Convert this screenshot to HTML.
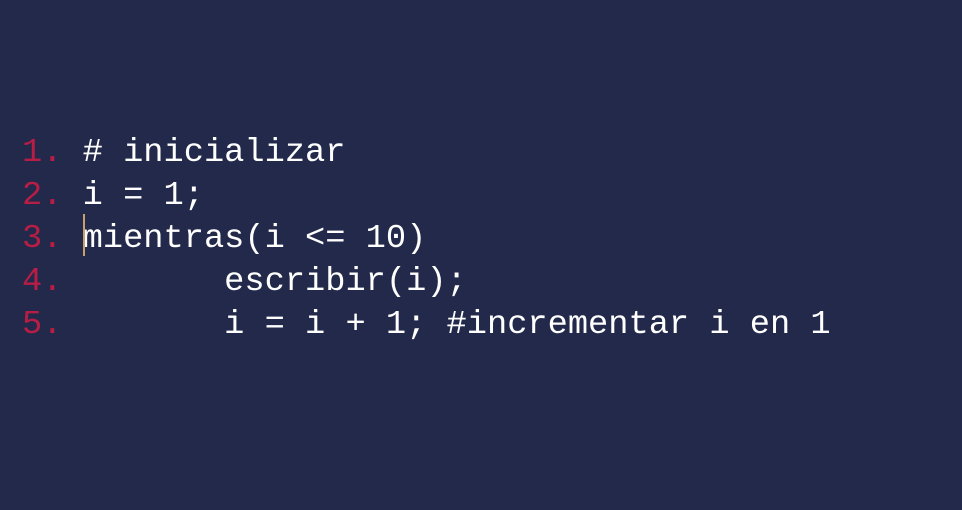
<!DOCTYPE html>
<html><head><style>
html,body{margin:0;padding:0;width:962px;height:510px;background:#22294a;overflow:hidden}
pre{position:absolute;left:22px;top:132px;margin:0;font-family:"Liberation Mono",monospace;font-size:33.7px;line-height:43px;color:#fff}
.n{color:#b81d45}
.c{position:absolute;left:83px;top:214px;width:2px;height:42px;background:#c8a070}
</style></head><body>
<pre><span class="n">1. </span># inicializar
<span class="n">2. </span>i = 1;
<span class="n">3. </span>mientras(i &lt;= 10)
<span class="n">4. </span>       escribir(i);
<span class="n">5. </span>       i = i + 1; #incrementar i en 1</pre>
<div class="c"></div>
</body></html>
